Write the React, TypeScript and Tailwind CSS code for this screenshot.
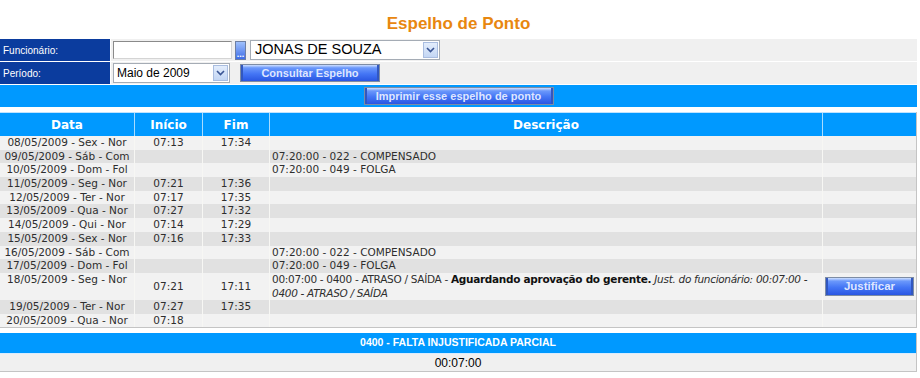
import React from "react";

type Row = {
  data: string;
  inicio?: string;
  fim?: string;
  desc?: string;
};

const rows: Row[] = [
  { data: "08/05/2009 - Sex - Nor", inicio: "07:13", fim: "17:34" },
  { data: "09/05/2009 - Sáb - Com", desc: "07:20:00 - 022 - COMPENSADO" },
  { data: "10/05/2009 - Dom - Fol", desc: "07:20:00 - 049 - FOLGA" },
  { data: "11/05/2009 - Seg - Nor", inicio: "07:21", fim: "17:36" },
  { data: "12/05/2009 - Ter - Nor", inicio: "07:17", fim: "17:35" },
  { data: "13/05/2009 - Qua - Nor", inicio: "07:27", fim: "17:32" },
  { data: "14/05/2009 - Qui - Nor", inicio: "07:14", fim: "17:29" },
  { data: "15/05/2009 - Sex - Nor", inicio: "07:16", fim: "17:33" },
  { data: "16/05/2009 - Sáb - Com", desc: "07:20:00 - 022 - COMPENSADO" },
  { data: "17/05/2009 - Dom - Fol", desc: "07:20:00 - 049 - FOLGA" },
];

const tail: Row[] = [
  { data: "19/05/2009 - Ter - Nor", inicio: "07:27", fim: "17:35" },
  { data: "20/05/2009 - Qua - Nor", inicio: "07:18" },
];

function BlueButton({
  children,
  className,
}: {
  children: React.ReactNode;
  className: string;
}) {
  return (
    <button
      className={`flex items-center justify-center border border-[#7d8ca4] bg-[linear-gradient(to_bottom,#cfe0ff_0%,#6b98fb_18%,#4476f5_55%,#2a56e2_100%)] shadow-[inset_2px_0_0_#3157c0,inset_-2px_0_0_#3157c0] font-bold text-[#dfe6ff] font-['Liberation_Sans',Arial,sans-serif] ${className}`}
    >
      {children}
    </button>
  );
}

function Arrow() {
  return (
    <div className="flex items-center justify-center w-[15px] h-[16px] border border-[#a9bde0] bg-[linear-gradient(to_bottom,#e3edfc,#c3d6f4)]">
      <svg width="9" height="6" viewBox="0 0 9 6">
        <path d="M1 1 L4.5 4.5 L8 1" fill="none" stroke="#3a5594" strokeWidth="1.6" />
      </svg>
    </div>
  );
}

const rowBg = (i: number) => (i % 2 === 0 ? "bg-[#f2f2f2]" : "bg-[#e1e1e1]");

function BodyRow({ r, i }: { r: Row; i: number }) {
  return (
    <div className={`grid grid-cols-[135px_68px_67px_553px_93px] h-[13.7px] leading-[13.7px] ${rowBg(i)}`}>
      <div className="text-center border-r border-[#f7f7f4] whitespace-nowrap">{r.data}</div>
      <div className="text-center border-r border-[#f7f7f4]">{r.inicio}</div>
      <div className="text-center border-r border-[#f7f7f4]">{r.fim}</div>
      <div className="pl-[2px] border-r border-[#f7f7f4] whitespace-nowrap">{r.desc}</div>
      <div />
    </div>
  );
}

export default function App() {
  return (
    <div className="w-[920px] h-[378px] bg-white font-['Liberation_Sans',Arial,sans-serif]">
      <div className="w-[917px]">
        <h1 className="h-[39px] pt-[14px] text-center text-[17px] leading-[20px] font-bold text-[#e8870f]">
          Espelho de Ponto
        </h1>

        <div className="flex flex-col gap-[1px]">
          <div className="flex h-[22px] gap-[1px]">
            <div className="w-[110px] bg-[#0b3c9e] text-white text-[10px] pl-[3px] flex items-center">
              Funcionário:
            </div>
            <div className="flex-1 bg-[#f0f0f0] flex items-center pl-[2px]">
              <div className="w-[119px] h-[18px] bg-white border border-[#8a8a8a] border-b-[#d4d4d4] border-r-[#d4d4d4]" />
              <div className="ml-[3px] w-[11px] h-[19px] border border-[#6d7fa3] bg-[linear-gradient(to_bottom,#9fc0fb,#3f6ee8)] flex items-end justify-center text-white text-[9px] leading-[10px] font-bold">
                ...
              </div>
              <div className="ml-[4px] w-[190px] h-[20px] bg-white border border-[#a5acb5] flex items-center justify-between pl-[4px] pr-[1px]">
                <span className="text-[14.5px] text-black">JONAS DE SOUZA</span>
                <Arrow />
              </div>
            </div>
          </div>

          <div className="flex h-[22px] gap-[1px]">
            <div className="w-[110px] bg-[#0b3c9e] text-white text-[10px] pl-[3px] flex items-center">
              Período:
            </div>
            <div className="flex-1 bg-[#f0f0f0] flex items-center pl-[2px]">
              <div className="w-[117px] h-[20px] bg-white border border-[#a5acb5] flex items-center justify-between pl-[3px] pr-[1px]">
                <span className="text-[12px] text-black">Maio de 2009</span>
                <Arrow />
              </div>
              <BlueButton className="ml-[10px] w-[140px] h-[18px] text-[11px]">
                Consultar Espelho
              </BlueButton>
            </div>
          </div>

          <div className="h-[22px] bg-[#0099ff] flex items-center justify-center">
            <BlueButton className="w-[190px] h-[18px] text-[11px]">
              Imprimir esse espelho de ponto
            </BlueButton>
          </div>
        </div>

        <div className="mt-[5px] border-r border-b border-[#c4c4c4] font-['DejaVu_Sans',Verdana,sans-serif] text-[10.5px] text-[#2e2e2e]">
          <div className="grid grid-cols-[135px_68px_67px_553px_93px] h-[24px] bg-[#0099ff] text-white font-bold text-[12px] border-t border-[#bfe3ff]">
            <div className="flex items-center justify-center border-r border-[#a8dcff]">Data</div>
            <div className="flex items-center justify-center border-r border-[#a8dcff]">Início</div>
            <div className="flex items-center justify-center border-r border-[#a8dcff]">Fim</div>
            <div className="flex items-center justify-center border-r border-[#a8dcff]">Descrição</div>
            <div />
          </div>

          {rows.map((r, i) => (
            <BodyRow key={i} r={r} i={i} />
          ))}

          <div className="grid grid-cols-[135px_68px_67px_553px_93px] h-[27px] leading-[13.7px] bg-[#f2f2f2]">
            <div className="text-center border-r border-[#f7f7f4] whitespace-nowrap">18/05/2009 - Seg - Nor</div>
            <div className="flex items-center justify-center border-r border-[#f7f7f4]">07:21</div>
            <div className="flex items-center justify-center border-r border-[#f7f7f4]">17:11</div>
            <div className="pl-[2px] border-r border-[#f7f7f4] whitespace-nowrap tracking-[-0.3px] overflow-hidden">
              00:07:00 - 0400 - ATRASO / SAÍDA - <b className="text-[#111]">Aguardando aprovação do gerente.</b>{" "}
              <i>Just. do funcionário: 00:07:00 -</i>
              <br />
              <i>0400 - ATRASO / SAÍDA</i>
            </div>
            <div className="flex items-center justify-center">
              <BlueButton className="w-[89px] h-[19px] text-[11.5px]">Justificar</BlueButton>
            </div>
          </div>

          {tail.map((r, i) => (
            <BodyRow key={i} r={r} i={i + 1} />
          ))}
        </div>

        <div className="mt-[5px] border-r border-b border-[#c4c4c4]">
          <div className="h-[20px] bg-[#0099ff] flex items-center justify-center text-white font-bold text-[10.5px]">
            0400 - FALTA INJUSTIFICADA PARCIAL
          </div>
          <div className="h-[18px] bg-[#f0f0f0] border-t border-[#d8ecff] flex items-center justify-center text-[12px] text-black">
            00:07:00
          </div>
        </div>
      </div>
    </div>
  );
}
